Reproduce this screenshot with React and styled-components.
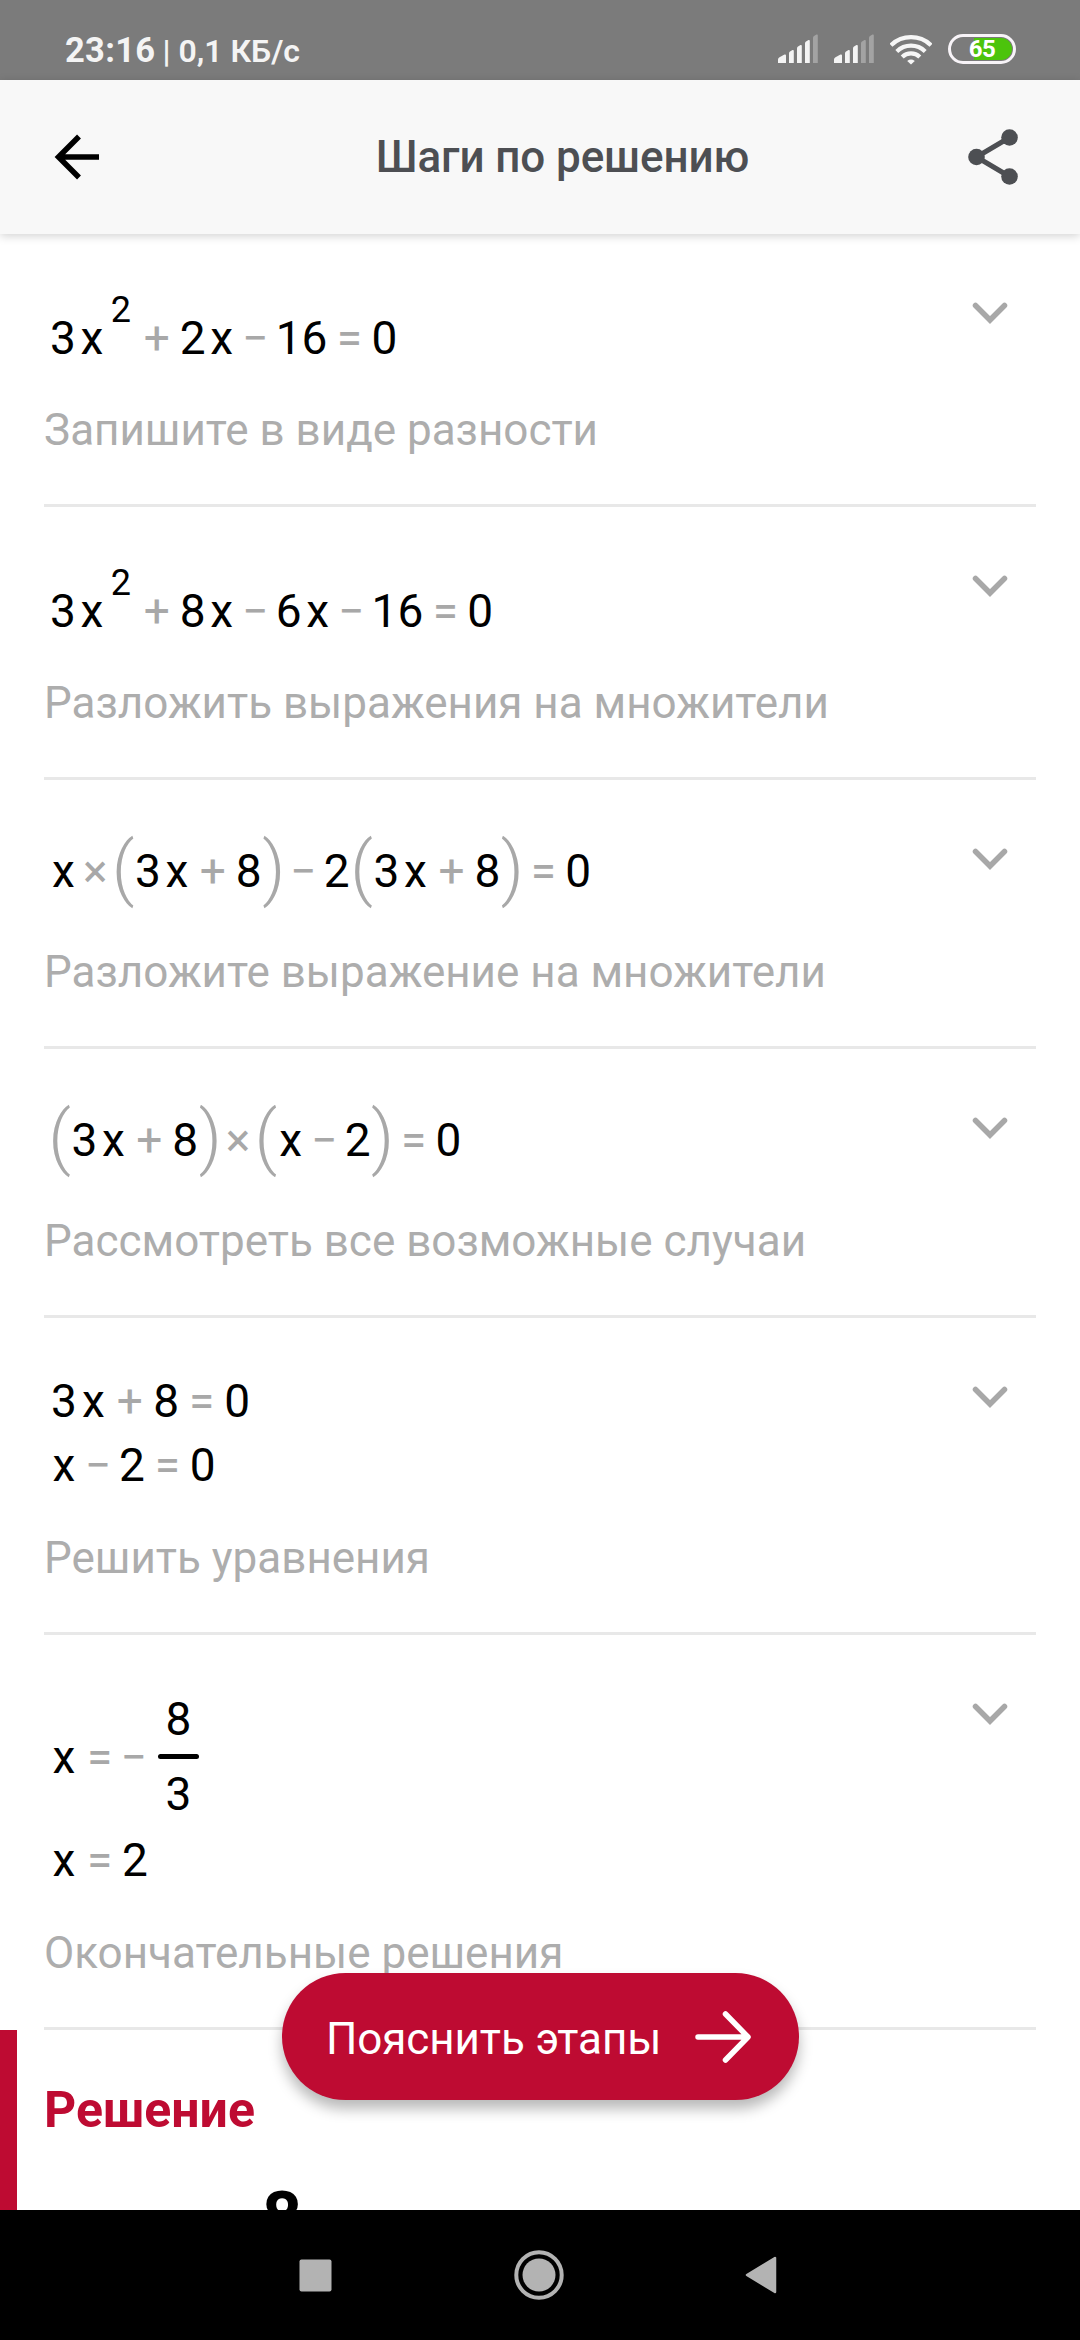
import styled, { createGlobalStyle } from 'styled-components';

const steps = [
    {
        lines: [{ kind: 'power', tokens: ['3', 'x', '^2', '+', '2', 'x', '−', '16', '=', '0'] }],
        caption: 'Запишите в виде разности',
    },
    {
        lines: [{ kind: 'power', tokens: ['3', 'x', '^2', '+', '8', 'x', '−', '6', 'x', '−', '16', '=', '0'] }],
        caption: 'Разложить выражения на множители',
    },
    {
        lines: [
            {
                kind: 'group',
                tokens: ['x', '×', '(', '3', 'x', '+', '8', ')', '−', '2', '(', '3', 'x', '+', '8', ')', '=', '0'],
            },
        ],
        caption: 'Разложите выражение на множители',
    },
    {
        lines: [{ kind: 'group', tokens: ['(', '3', 'x', '+', '8', ')', '×', '(', 'x', '−', '2', ')', '=', '0'] }],
        caption: 'Рассмотреть все возможные случаи',
    },
    {
        lines: [
            { kind: 'plain', tokens: ['3', 'x', '+', '8', '=', '0'] },
            { kind: 'plain', tokens: ['x', '−', '2', '=', '0'] },
        ],
        caption: 'Решить уравнения',
    },
    {
        lines: [
            { kind: 'fraction', tokens: ['x', '=', 'neg', '8/3'] },
            { kind: 'plain', tokens: ['x', '=', '2'] },
        ],
        caption: 'Окончательные решения',
    },
];

const operatorWidths = { '+': 43, '−': 38, '=': 41, '×': 34.5 };

const Token = ({ value }) => {
    if (value === 'neg') {
        return <Operator $width={26}>−</Operator>;
    }
    if (operatorWidths[value]) {
        return <Operator $width={operatorWidths[value]}>{value}</Operator>;
    }
    if (value === '(' || value === ')') {
        return <Paren>{value}</Paren>;
    }
    if (value === 'x') {
        return <Variable>x</Variable>;
    }
    if (value.startsWith('^')) {
        return <Power>{value.slice(1)}</Power>;
    }
    if (value.includes('/')) {
        const [top, bottom] = value.split('/');
        return (
            <Fraction>
                <span>{top}</span>
                <FractionBar />
                <span>{bottom}</span>
            </Fraction>
        );
    }
    return <Numeral>{value}</Numeral>;
};

const Signal = ({ level }) => (
    <svg width='40' height='30' viewBox='0 0 40 30'>
        {[
            'M0 29v-3.500q0-1.500 1.500-2.300l5-2.700q1.500-.5 1.500 1V29z',
            'M11 29V19.500q0-1.500 1-2l2.500-1.500q1.300-.5 1.300 1V29z',
            'M19 29V14.500q0-1.500 1-2l2.500-1.500q1.300-.5 1.300 1V29z',
            'M27 29V9.500q0-1.500 1-2l2.500-1.500q1.300-.5 1.300 1V29z',
            'M35 29V4q0-1.500 1-2l2.500-1.500q1.300-.5 1.300 1V29z',
        ].map((d, i) => (
            <path key={d} d={d} fill={i < level ? '#f4f4f4' : '#a3a3a3'} />
        ))}
    </svg>
);

const WifiIcon = () => (
    <svg width='42' height='32' viewBox='1 0 42 32' fill='none' stroke='#f6f6f6' strokeWidth='4.2'>
        <path d='M2 12.200a29 29 0 0 1 40 0' />
        <path d='M7.800 18.400a20.500 20.500 0 0 1 28.400 0' />
        <path d='M13.200 24a12.700 12.700 0 0 1 17.600 0' />
        <path d='M22 31.500l-3.800-3.600q3.800-2.800 7.600 0z' fill='#f6f6f6' stroke='none' />
    </svg>
);

const BackIcon = () => (
    <svg width='46' height='46' viewBox='0 0 46 46' fill='none' stroke='#000' strokeWidth='5.500'>
        <path d='M45 23H5M25 2.500L4.500 23L25 43.500' />
    </svg>
);

const ShareIcon = () => (
    <svg width='50' height='58' viewBox='0 0 50 58' fill='#4d4f53' stroke='#4d4f53'>
        <path d='M41.500 9.500L8.500 29L41.500 48.500' fill='none' strokeWidth='5' />
        <circle cx='41.500' cy='9.500' r='8.300' stroke='none' />
        <circle cx='8.500' cy='29' r='8.300' stroke='none' />
        <circle cx='41.500' cy='48.500' r='8.300' stroke='none' />
    </svg>
);

const ChevronIcon = () => (
    <svg width='36' height='22' viewBox='0 0 36 22' fill='none' stroke='#a8a8a8' strokeWidth='5.500'>
        <path d='M3.500 3.500L18 18L32.500 3.500' strokeLinecap='round' />
    </svg>
);

const ArrowIcon = () => (
    <svg width='56' height='54' viewBox='0 0 56 54' fill='none' stroke='#fff' strokeWidth='5.500'>
        <path d='M3 27H52M30.500 4L53 27L30.500 50' strokeLinecap='round' strokeLinejoin='round' />
    </svg>
);

const App = () => {
    return (
        <Screen>
            <GlobalStyle />
            <StatusBar>
                <Clock>23:16</Clock>
                <Traffic>| 0,1 КБ/с</Traffic>
                <StatusIcons>
                    <Signal level={4} />
                    <Signal level={3} />
                    <WifiIcon />
                    <Battery>
                        <span>65</span>
                    </Battery>
                </StatusIcons>
            </StatusBar>

            <AppBar>
                <BackIcon />
                <Title>Шаги по решению</Title>
                <ShareIcon />
            </AppBar>

            <Content>
                {steps.map((step) => (
                    <Step key={step.caption}>
                        <StepBody>
                            {step.lines.map((line, i) => (
                                <Formula key={i} $kind={line.kind}>
                                    {line.tokens.map((token, j) => (
                                        <Token key={j} value={token} />
                                    ))}
                                </Formula>
                            ))}
                            <Caption>{step.caption}</Caption>
                        </StepBody>
                        <ChevronIcon />
                    </Step>
                ))}

                <Solution>
                    <h2>Решение</h2>
                    <SolutionNumerator>8</SolutionNumerator>
                </Solution>

                <ExplainButton>
                    <ButtonLabel>Пояснить этапы</ButtonLabel>
                    <ArrowIcon />
                </ExplainButton>
            </Content>

            <NavBar>
                <svg width='33' height='33' viewBox='0 0 33 33'>
                    <rect x='0.500' y='0.500' width='32' height='32' rx='2' fill='#b3b3b3' />
                </svg>
                <svg width='50' height='50' viewBox='0 0 50 50'>
                    <circle cx='25' cy='25' r='22.700' fill='none' stroke='#b3b3b3' strokeWidth='4' />
                    <circle cx='25' cy='25' r='16.500' fill='#b3b3b3' />
                </svg>
                <svg width='32' height='38' viewBox='0 0 32 38'>
                    <path
                        d='M2 19L30 2V36Z'
                        fill='#b3b3b3'
                        stroke='#b3b3b3'
                        strokeWidth='2.500'
                        strokeLinejoin='round'
                    />
                </svg>
            </NavBar>
        </Screen>
    );
};

const GlobalStyle = createGlobalStyle`
    * {
        margin: 0;
        padding: 0;
        box-sizing: border-box;
    }

    body {
        font-family: Roboto, sans-serif;
        background: #fff;
    }

    svg {
        display: block;
        flex-shrink: 0;
    }
`;

const Screen = styled.div`
    width: 1080px;
    height: 2340px;
    display: flex;
    flex-direction: column;
    overflow: hidden;
`;

const StatusBar = styled.div`
    height: 80px;
    padding: 20px 64px 0 65px;
    display: flex;
    align-items: baseline;
    background: #7b7b7b;
    color: #f4f4f4;
    white-space: pre;
`;

const Clock = styled.span`
    font-size: 34.5px;
    font-weight: 700;
    line-height: 60px;
    letter-spacing: 0.3px;
`;

const Traffic = styled.span`
    margin-left: 7px;
    font-size: 32px;
    font-weight: 600;
`;

const StatusIcons = styled.div`
    height: 32px;
    margin-left: auto;
    align-self: flex-start;
    display: flex;
    align-items: center;
    gap: 16px;
    margin-top: 13px;
`;

const Battery = styled.div`
    width: 68px;
    height: 30px;
    border: 3.500px solid #f8f4f8;
    border-radius: 15px;
    padding: 1px;
    display: flex;
    align-items: center;
    justify-content: center;

    span {
        flex: 1;
        height: 100%;
        border-radius: 11px;
        background: linear-gradient(to right, transparent 36%, #4cc40c 36%);
        color: #fff;
        font-size: 24px;
        font-weight: 700;
        line-height: 22px;
        letter-spacing: -0.5px;
        text-align: center;
    }
`;

const AppBar = styled.header`
    height: 154px;
    flex-shrink: 0;
    padding: 0 62px 0 54px;
    display: flex;
    align-items: center;
    justify-content: space-between;
    background: #f8f8f8;
    box-shadow: 0 2px 9px rgba(0, 0, 0, 0.18);
    z-index: 1;
`;

const Title = styled.h1`
    margin-left: 57px;
    font-size: 44px;
    font-weight: 500;
    letter-spacing: -0.1px;
    color: #4d4f53;
`;

const Content = styled.main`
    position: relative;
    height: 1976px;
    flex-shrink: 0;
    overflow: hidden;
`;

const Step = styled.section`
    margin: 0 44px;
    padding: 51px 28px 49px 0;
    display: flex;
    justify-content: space-between;
    border-bottom: 3px solid #e8e8e8;

    > svg {
        margin-top: 17px;
    }
`;

const StepBody = styled.div`
    min-width: 0;
`;

const rowLayouts = {
    plain: 'height: 64px; padding-left: 5.5px; gap: 0.5px;',
    power: 'height: 84px; padding: 21px 0 0 4.5px;',
    group: 'height: 80px; padding-left: 5px;',
    fraction: 'height: 142px; padding-left: 5.5px; gap: 0.5px;',
};

const Formula = styled.div`
    ${({ $kind }) => rowLayouts[$kind]}
    display: flex;
    align-items: center;
    font-size: 46px;
    line-height: 64px;
    color: #000;
`;

const Numeral = styled.span`
    padding: 0 1.500px;
`;

const Variable = styled.span`
    width: 29px;
    text-align: center;
`;

const Operator = styled.span`
    width: ${({ $width }) => $width}px;
    text-align: center;
    color: #a8a8a8;
`;

const Paren = styled.span`
    width: 21px;
    display: flex;
    justify-content: center;
    font-size: 71px;
    font-weight: 350;
    margin-top: -6px;
    color: #a8a8a8;
`;

const Power = styled.span`
    width: 29px;
    padding-bottom: 55px;
    font-size: 36px;
    text-align: center;
`;

const Fraction = styled.span`
    margin: 0 0 2px 11px;
    width: 41px;
    display: flex;
    flex-direction: column;
    align-items: center;
    line-height: 54px;
`;

const FractionBar = styled.i`
    width: 100%;
    height: 5px;
    margin: 8px 0;
    border-radius: 3px;
    background: #000;
`;

const Caption = styled.p`
    margin-top: 36px;
    font-size: 44px;
    line-height: 50px;
    white-space: nowrap;
    color: #adadad;
`;

const Solution = styled.section`
    height: 400px;
    padding: 52px 0 0 27px;
    border-left: 17px solid #be0b32;

    h2 {
        font-size: 50px;
        font-weight: 700;
        line-height: 56px;
        color: #be0b32;
    }
`;

const SolutionNumerator = styled.p`
    margin: 41px 0 0 218px;
    font-size: 70px;
    font-weight: 700;
    line-height: 76px;
`;

const ExplainButton = styled.button`
    position: absolute;
    left: 282px;
    bottom: 110px;
    width: 517px;
    height: 127px;
    padding: 0 48px 0 44px;
    border: 0;
    border-radius: 64px;
    display: flex;
    align-items: center;
    justify-content: space-between;
    background: #be0b32;
    box-shadow: 0 9px 14px rgba(0, 0, 0, 0.28);
    color: #fff;
    font: 400 44px/54px Roboto, sans-serif;
    letter-spacing: -0.1px;
`;

const ButtonLabel = styled.span`
    padding-top: 4px;
`;

const NavBar = styled.nav`
    height: 130px;
    flex-shrink: 0;
    padding: 0 303px 0 299px;
    display: flex;
    align-items: center;
    justify-content: space-between;
    background: #000;
`;

export default App;
